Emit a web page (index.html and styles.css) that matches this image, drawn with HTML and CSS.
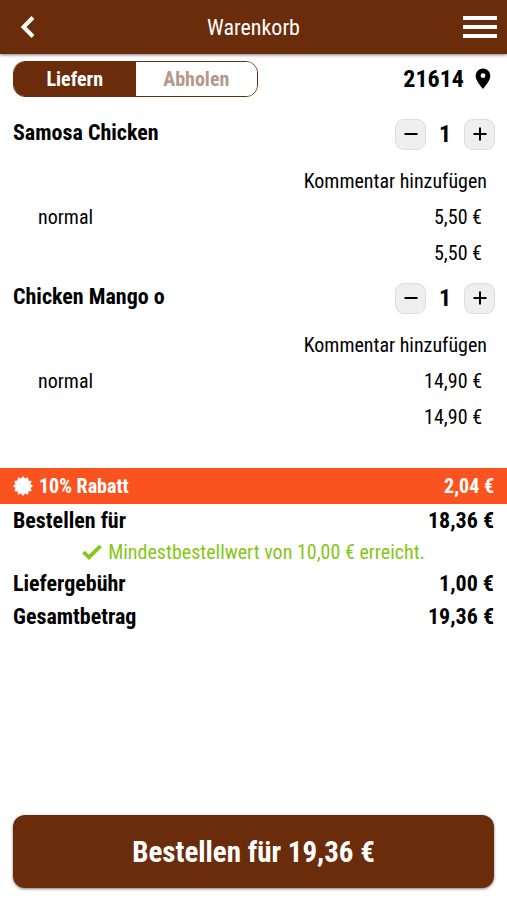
FILE: index.html
```
<!DOCTYPE html>
<html lang="de">

<head>
    <meta charset="UTF-8">
    <meta name="viewport" content="width=device-width, initial-scale=1.0">
    <title>Warenkorb</title>
    <link rel="stylesheet" href="styles.css">
</head>

<body>
    <header class="topbar">
        <button type="button" class="icon-button back" aria-label="Zurück">
            <svg width="16" height="24" viewBox="0 0 16 24"><path d="M13 2.500L3.500 12L13 21.500" fill="none" stroke="currentColor" stroke-width="4"/></svg>
        </button>
        <h1>Warenkorb</h1>
        <button type="button" class="icon-button menu" aria-label="Menü">
            <svg width="34" height="24" viewBox="0 0 34 24"><path d="M0 3H34M0 12H34M0 21H34" stroke="currentColor" stroke-width="4"/></svg>
        </button>
    </header>
    <main>
        <div class="delivery">
            <div class="toggle">
                <button type="button" class="active">Liefern</button>
                <button type="button">Abholen</button>
            </div>
            <a href="#" class="zip">21614
                <svg width="16" height="22" viewBox="0 0 16 22"><path fill="currentColor" fill-rule="evenodd" d="M8 0.500C4 0.500 0.700 3.700 0.700 8C0.700 12.500 5 17 8 21C11 17 15.300 12.500 15.300 8C15.300 3.700 12 0.500 8 0.500ZM8 5.300A2.400 2.400 0 1 1 8 10.100A2.400 2.400 0 1 1 8 5.300Z"/></svg>
            </a>
        </div>
        <section class="item">
            <div class="item-head">
                <h2>Samosa Chicken</h2>
                <div class="amount">
                    <button type="button" aria-label="Weniger"><svg width="14" height="14" viewBox="0 0 14 14"><path d="M0.500 7H13.500" stroke="currentColor" stroke-width="2"/></svg></button>
                    <span>1</span>
                    <button type="button" aria-label="Mehr"><svg width="14" height="14" viewBox="0 0 14 14"><path d="M0.500 7H13.500M7 0.500V13.500" stroke="currentColor" stroke-width="2"/></svg></button>
                </div>
            </div>
            <a href="#" class="comment">Kommentar hinzufügen</a>
            <div class="line"><span>normal</span><span>5,50 €</span></div>
            <div class="line sum"><span>5,50 €</span></div>
        </section>
        <section class="item">
            <div class="item-head">
                <h2>Chicken Mango o</h2>
                <div class="amount">
                    <button type="button" aria-label="Weniger"><svg width="14" height="14" viewBox="0 0 14 14"><path d="M0.500 7H13.500" stroke="currentColor" stroke-width="2"/></svg></button>
                    <span>1</span>
                    <button type="button" aria-label="Mehr"><svg width="14" height="14" viewBox="0 0 14 14"><path d="M0.500 7H13.500M7 0.500V13.500" stroke="currentColor" stroke-width="2"/></svg></button>
                </div>
            </div>
            <a href="#" class="comment">Kommentar hinzufügen</a>
            <div class="line"><span>normal</span><span>14,90 €</span></div>
            <div class="line sum"><span>14,90 €</span></div>
        </section>
        <section class="summary">
            <div class="discount">
                <span class="label">
                    <svg width="20" height="20" viewBox="0 0 20 20"><path fill="currentColor" d="M10 0L12 2.400L15 1.300L15.500 4.500L18.700 5L17.600 8L20 10L17.600 12L18.700 15L15.500 15.500L15 18.700L12 17.600L10 20L8 17.600L5 18.700L4.500 15.500L1.300 15L2.400 12L0 10L2.400 8L1.300 5L4.500 4.500L5 1.300L8 2.400Z"/></svg>
                    10% Rabatt
                </span>
                <span>2,04 €</span>
            </div>
            <div class="total"><span>Bestellen für</span><span>18,36 €</span></div>
            <p class="minimum">
                <svg width="20" height="16" viewBox="0 0 20 16"><path d="M1.500 8L7 13.300L18.500 2" fill="none" stroke="currentColor" stroke-width="3.800"/></svg>
                Mindestbestellwert von 10,00 € erreicht.
            </p>
            <div class="total"><span>Liefergebühr</span><span>1,00 €</span></div>
            <div class="total"><span>Gesamtbetrag</span><span>19,36 €</span></div>
        </section>
    </main>
    <footer>
        <button type="button" class="order">Bestellen für 19,36 €</button>
    </footer>
</body>

</html>
```
FILE: styles.css
```
* {
    box-sizing: border-box;
}

body {
    display: flex;
    flex-direction: column;
    min-height: 100vh;
    margin: 0;
    background-color: white;
    color: black;
    font-family: "Roboto Condensed", Roboto, sans-serif;
    font-size: 20px;
}

h1,
h2,
p {
    margin: 0;
}

button {
    padding: 0;
    border: none;
    font-family: inherit;
    cursor: pointer;
}

a {
    color: inherit;
    text-decoration: none;
}

svg {
    display: block;
    flex: none;
}

.topbar {
    display: grid;
    grid-template-columns: 1fr auto 1fr;
    align-items: center;
    height: 54px;
    padding: 0 10px;
    background-color: #6a2c0b;
    color: white;
    box-shadow: 0 1px 3px rgba(0, 0, 0, 0.5);
}

.topbar h1 {
    font-size: 22px;
    font-weight: 400;
}

.icon-button {
    background: none;
    color: inherit;
}

.icon-button.back {
    justify-self: start;
    padding: 0 10px;
}

.icon-button.menu {
    justify-self: end;
}

main {
    flex: 1;
}

.delivery {
    display: flex;
    justify-content: space-between;
    align-items: center;
    padding: 7px 16px 18px 13px;
}

.toggle {
    display: flex;
    width: 245px;
    height: 36px;
    border: 1px solid #6a2c0b;
    border-radius: 12px;
    overflow: hidden;
}

.toggle button {
    flex: 1;
    background-color: white;
    color: #b5988a;
    font-size: 20px;
    font-weight: 700;
}

.toggle .active {
    background-color: #6a2c0b;
    color: white;
}

.zip {
    display: flex;
    align-items: center;
    gap: 11px;
    font-size: 24px;
    font-weight: 700;
}

.item {
    margin-bottom: 8px;
}

.item-head {
    display: flex;
    justify-content: space-between;
    margin-bottom: 10px;
    padding: 0 12px 0 13px;
}

.item-head h2 {
    font-size: 22px;
    line-height: 35px;
}

.amount {
    display: flex;
    align-items: center;
    height: 38px;
    font-size: 24px;
    font-weight: 700;
}

.amount button {
    display: flex;
    justify-content: center;
    align-items: center;
    width: 31px;
    height: 31px;
    border: 1px solid #dcdcdc;
    border-radius: 9px;
    background-color: #efefef;
    color: black;
}

.amount span {
    width: 38px;
    text-align: center;
}

.comment {
    display: block;
    padding-right: 20px;
    line-height: 36px;
    text-align: right;
}

.line {
    display: flex;
    justify-content: space-between;
    padding: 0 25px 0 38px;
    line-height: 36px;
}

.line.sum {
    justify-content: flex-end;
}

.summary {
    margin-top: 33px;
}

.discount {
    display: flex;
    justify-content: space-between;
    padding: 0 13px;
    background-color: #fb531f;
    color: white;
    font-weight: 700;
    line-height: 36px;
}

.discount .label {
    display: flex;
    align-items: center;
    gap: 6px;
}

.total {
    display: flex;
    justify-content: space-between;
    padding: 0 13px;
    font-size: 22px;
    font-weight: 700;
    line-height: 33px;
}

.minimum {
    display: flex;
    justify-content: center;
    align-items: center;
    gap: 6px;
    color: #84c714;
    line-height: 30px;
}

footer {
    padding: 12px 13px;
}

.order {
    width: 100%;
    height: 73px;
    border-radius: 12px;
    background-color: #6a2c0b;
    color: white;
    font-size: 29px;
    font-weight: 700;
    box-shadow: 0 1px 3px rgba(0, 0, 0, 0.5);
}
```
